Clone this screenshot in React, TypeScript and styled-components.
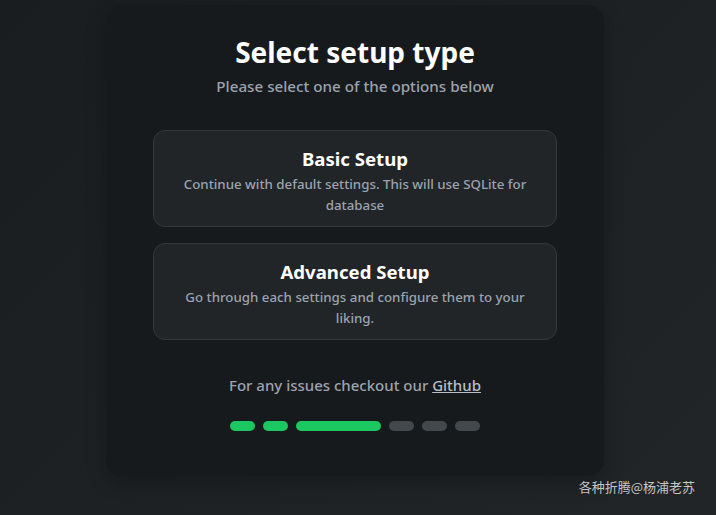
import React from "react";
import styled, { createGlobalStyle } from "styled-components";

const GlobalStyle = createGlobalStyle`
  html, body {
    margin: 0;
    padding: 0;
    height: 100%;
  }
  body {
    background: linear-gradient(135deg, #1a1d20 0%, #1e2225 60%, #212528 100%);
    font-family: "Noto Sans", "Open Sans", sans-serif;
    color: #f3f4f6;
  }
  #root {
    height: 100%;
  }
`;

const Page = styled.div`
  width: 716px;
  height: 515px;
  display: flex;
  justify-content: center;
  padding: 5px 6px 0 0;
  box-sizing: border-box;
  position: relative;
  overflow: hidden;
`;

const Card = styled.div`
  width: 498px;
  height: 471px;
  box-sizing: border-box;
  background: #171a1d;
  border-radius: 16px;
  box-shadow: 0 6px 20px rgba(0, 0, 0, 0.25);
  padding: 28px 47px 0;
  display: flex;
  flex-direction: column;
  align-items: center;
`;

const Title = styled.h1`
  margin: 0;
  font-size: 28px;
  font-weight: 700;
  line-height: 38px;
  color: #ffffff;
`;

const Subtitle = styled.p`
  margin: 4px 0 0;
  font-size: 15.2px;
  line-height: 22px;
  color: #9ca3af;
  font-weight: 500;
`;

const Options = styled.div`
  margin-top: 33px;
  width: 100%;
  display: flex;
  flex-direction: column;
  gap: 16px;
`;

const Option = styled.div`
  height: 97px;
  box-sizing: border-box;
  background: #212528;
  border: 1px solid #33383c;
  border-radius: 12px;
  padding: 15px 24px 0;
  text-align: center;
  cursor: pointer;
`;

const OptionTitle = styled.div`
  font-size: 18.6px;
  font-weight: 700;
  line-height: 26px;
  color: #ffffff;
`;

const OptionText = styled.div`
  margin-top: 2px;
  font-size: 13.3px;
  line-height: 21px;
  color: #9ca3af;
  font-weight: 500;
`;

const Help = styled.p`
  margin: 34px 0 0;
  font-size: 15px;
  line-height: 22px;
  color: #9ca3af;
  font-weight: 500;
`;

const Link = styled.a`
  color: #b8bec6;
  text-decoration: underline;
`;

const Steps = styled.div`
  margin-top: 25px;
  display: flex;
  gap: 8px;
`;

const Step = styled.div<{ $active?: boolean; $wide?: boolean }>`
  width: ${(p) => (p.$wide ? "85px" : "25px")};
  height: 10px;
  border-radius: 5px;
  background: ${(p) => (p.$active ? "#1ac760" : "#43484d")};
`;

const Watermark = styled.div`
  position: absolute;
  right: 21px;
  bottom: 19px;
  font-family: "Noto Sans CJK SC", sans-serif;
  font-size: 13px;
  color: #c4c6c8;
`;

const steps = [
  { active: true },
  { active: true },
  { active: true, wide: true },
  { active: false },
  { active: false },
  { active: false },
];

export default function App() {
  return (
    <>
      <GlobalStyle />
      <Page>
        <Card>
          <Title>Select setup type</Title>
          <Subtitle>Please select one of the options below</Subtitle>
          <Options>
            <Option>
              <OptionTitle>Basic Setup</OptionTitle>
              <OptionText>
                Continue with default settings. This will use SQLite for database
              </OptionText>
            </Option>
            <Option>
              <OptionTitle>Advanced Setup</OptionTitle>
              <OptionText>
                Go through each settings and configure them to your liking.
              </OptionText>
            </Option>
          </Options>
          <Help>
            For any issues checkout our <Link href="#">Github</Link>
          </Help>
          <Steps>
            {steps.map((s, i) => (
              <Step key={i} $active={s.active} $wide={s.wide} />
            ))}
          </Steps>
        </Card>
        <Watermark>各种折腾@杨浦老苏</Watermark>
      </Page>
    </>
  );
}
